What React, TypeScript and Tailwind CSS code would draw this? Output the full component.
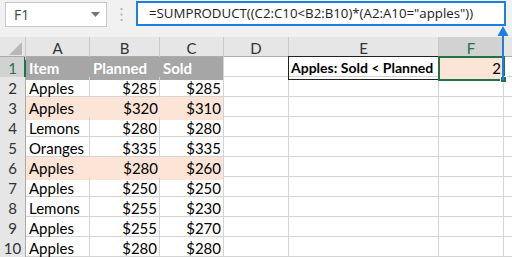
import React from "react";

const rows: { n: number; a: string; b: string; c: string; hl?: boolean }[] = [
  { n: 2, a: "Apples", b: "$285", c: "$285" },
  { n: 3, a: "Apples", b: "$320", c: "$310", hl: true },
  { n: 4, a: "Lemons", b: "$280", c: "$280" },
  { n: 5, a: "Oranges", b: "$335", c: "$335" },
  { n: 6, a: "Apples", b: "$280", c: "$260", hl: true },
  { n: 7, a: "Apples", b: "$250", c: "$250" },
  { n: 8, a: "Lemons", b: "$255", c: "$230" },
  { n: 9, a: "Apples", b: "$255", c: "$270" },
  { n: 10, a: "Apples", b: "$280", c: "$280" },
];

const gridCols = "grid grid-cols-[26px_64px_70px_64px_65px_150px_65px_1fr]";

export default function App() {
  return (
    <div
      className="relative w-[512px] h-[257px] overflow-hidden bg-white text-[15px] text-black"
      style={{ fontFamily: 'Lato, "Liberation Sans", Arial, sans-serif' }}
    >
      {/* Formula bar */}
      <div className="h-[37px] bg-[#f1f1f1] flex items-start pt-[2px]">
        <div className="ml-[5px] w-[102px] h-[25px] bg-white border border-[#c6c6c6] flex items-center justify-between pl-[8px] pr-[6px]">
          <span className="text-[14px] text-[#444]" style={{ fontFamily: '"Open Sans", sans-serif' }}>F1</span>
          <svg width="9" height="5" viewBox="0 0 9 5">
            <path d="M0 0 L9 0 L4.5 5 Z" fill="#777" />
          </svg>
        </div>
        <div className="w-[29px] h-[25px] flex items-center justify-center">
          <svg width="3" height="13" viewBox="0 0 3 13">
            <rect x="0.5" y="0" width="2" height="2" fill="#b5b5b5" />
            <rect x="0.5" y="5.5" width="2" height="2" fill="#b5b5b5" />
            <rect x="0.5" y="11" width="2" height="2" fill="#b5b5b5" />
          </svg>
        </div>
        <div className="-mt-[1px] w-[370px] h-[25px] bg-white border-2 border-[#1e7fe0] flex items-center pl-[11px]">
          <span className="text-[13.25px] text-[#222] whitespace-nowrap" style={{ fontFamily: '"Open Sans", sans-serif' }}>
            =SUMPRODUCT((C2:C10&lt;B2:B10)*(A2:A10="apples"))
          </span>
        </div>
      </div>

      {/* Column headers */}
      <div className={`${gridCols} h-[20px] bg-[#e6e6e6] border-b border-[#ababab] text-[#333] text-[15px]`}>
        <div className="border-r border-[#c8c8c8] relative">
          <svg className="absolute left-[9px] top-[5px]" width="13" height="13" viewBox="0 0 13 13">
            <path d="M13 0 L13 13 L0 13 Z" fill="#b8b8b8" />
          </svg>
        </div>
        {["A", "B", "C", "D", "E"].map((l) => (
          <div key={l} className="border-r border-[#c8c8c8] flex items-center justify-center">{l}</div>
        ))}
        <div className="border-r border-[#c8c8c8] bg-[#d2d2d2] text-[#217346] flex items-center justify-center shadow-[inset_0_-2px_0_#217346]">F</div>
        <div></div>
      </div>

      {/* Row 1 */}
      <div className={`${gridCols} h-[20px] border-b border-[#d4d4d4]`}>
        <div className="bg-[#d2d2d2] text-[#217346] flex items-center justify-center border-r-2 border-[#217346] pl-[1px]">1</div>
        <div className="bg-[#a6a6a6] text-white font-bold pl-[3px] flex items-center">Item</div>
        <div className="bg-[#a6a6a6] text-white font-bold pl-[3px] flex items-center">Planned</div>
        <div className="bg-[#a6a6a6] text-white font-bold pl-[3px] flex items-center border-r border-[#d4d4d4]">Sold</div>
        <div className="border-r border-[#d4d4d4]"></div>
        <div className="relative">
          <div className="absolute left-[-1px] top-[-1px] right-0 bottom-0 border border-[#222] font-bold text-[14px] pl-[2px] flex items-center whitespace-nowrap">
            Apples: Sold &lt; Planned
          </div>
        </div>
        <div className="relative">
          <div className="absolute left-[-1px] top-[-1px] right-[-1px] bottom-[-1px] border-2 border-[#217346] bg-[#fce4d6] flex items-center justify-end pr-[2px]">
            2
          </div>
          <div className="absolute right-[-3px] bottom-[-3px] w-[5px] h-[5px] bg-[#217346] border border-white box-content"></div>
        </div>
        <div className="border-l border-[#d4d4d4]"></div>
      </div>

      {/* Data rows */}
      {rows.map((r) => (
        <div key={r.n} className={`${gridCols} h-[20px] border-b border-[#d4d4d4]`}>
          <div className="bg-[#e6e6e6] text-[#333] border-r border-[#ababab] flex items-center justify-center">{r.n}</div>
          <div className={`${r.hl ? "bg-[#fce4d6]" : "border-r border-[#d4d4d4]"} pl-[3px] flex items-center`}>{r.a}</div>
          <div className={`${r.hl ? "bg-[#fce4d6]" : "border-r border-[#d4d4d4]"} pr-[2px] flex items-center justify-end`}>{r.b}</div>
          <div className={`${r.hl ? "bg-[#fce4d6] border-r border-[#d4d4d4]" : "border-r border-[#d4d4d4]"} pr-[2px] flex items-center justify-end`}>{r.c}</div>
          <div className="border-r border-[#d4d4d4]"></div>
          <div className="border-r border-[#d4d4d4]"></div>
          <div className="border-r border-[#d4d4d4]"></div>
          <div></div>
        </div>
      ))}

      {/* Arrow */}
      <svg className="absolute left-[497px] top-[26px]" width="12" height="54" viewBox="0 0 12 54">
        <rect x="5" y="8" width="2" height="46" fill="#1e7fe0" />
        <path d="M6 0 L11.5 10 L0.5 10 Z" fill="#1e7fe0" />
      </svg>
    </div>
  );
}
